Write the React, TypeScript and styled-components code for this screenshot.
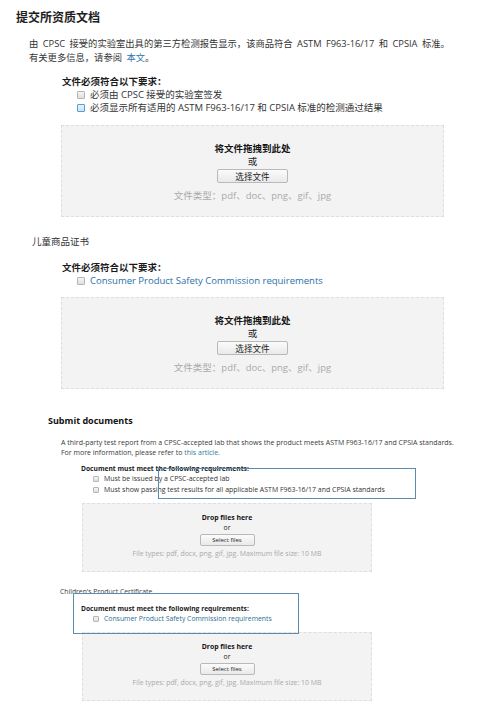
import React from 'react';
import styled, { createGlobalStyle, css } from 'styled-components';

type Lang = 'cn' | 'en';

const GlobalStyle = createGlobalStyle`
  html, body {
    margin: 0;
    padding: 0;
    background: #fff;
  }
  body {
    font-family: 'Open Sans', 'Noto Sans CJK SC', sans-serif;
    color: #333;
  }
`;

const Page = styled.div`
  width: 480px;
  height: 716px;
  overflow: hidden;
  padding-top: 10px;
  box-sizing: border-box;
`;

const CnTitle = styled.h1`
  margin: 0 0 0 16px;
  font-size: 12px;
  line-height: 16px;
  font-weight: 700;
  color: #1e1e1e;
`;

const EnTitle = styled.h2`
  margin: 26px 0 0 48px;
  font-size: 9px;
  line-height: 12px;
  font-weight: 700;
  color: #111;
`;

const Intro = styled.p<{ $lang: Lang }>`
  margin: 0;
  ${(p) =>
    p.$lang === 'cn'
      ? css`
          margin: 11px 0 0 29px;
          font-size: 9.3px;
          line-height: 14px;
          word-spacing: 2px;
          color: #333;
        `
      : css`
          margin: 11px 0 0 61px;
          font-size: 7px;
          line-height: 9.5px;
          color: #3a3a3a;
        `}
`;

const Link = styled.a<{ $lang: Lang }>`
  color: ${(p) => (p.$lang === 'cn' ? '#2f76b3' : '#2e7d98')};
  text-decoration: none;
`;

const Label = styled.div<{ $lang: Lang }>`
  ${(p) =>
    p.$lang === 'cn'
      ? css`
          margin: 18px 0 0 32px;
          font-size: 9.5px;
          line-height: 14px;
          color: #333;
        `
      : css`
          margin: 15px 0 0 60px;
          font-size: 6.8px;
          line-height: 10px;
          color: #3a3a3a;
        `}
`;

const Requirements = styled.div<{ $lang: Lang; $gap: number }>`
  margin-top: ${(p) => p.$gap}px;
  margin-left: ${(p) => (p.$lang === 'cn' ? 62 : 81)}px;
`;

const ReqHeading = styled.div<{ $lang: Lang }>`
  font-weight: 700;
  color: #1a1a1a;
  font-size: ${(p) => (p.$lang === 'cn' ? 9.5 : 6.7)}px;
  line-height: ${(p) => (p.$lang === 'cn' ? 13 : 10)}px;
`;

const ReqRow = styled.div<{ $lang: Lang; $link?: boolean }>`
  display: flex;
  align-items: center;
  padding-left: ${(p) => (p.$lang === 'cn' ? 15 : 12)}px;
  gap: 5px;
  font-size: ${(p) =>
    p.$lang === 'cn' ? (p.$link ? 9.5 : 9.5) : p.$link ? 6.85 : 6.95}px;
  line-height: ${(p) => (p.$lang === 'cn' ? 13 : 10.5)}px;
  color: ${(p) =>
    p.$link ? (p.$lang === 'cn' ? '#2a6fa8' : '#2f6f92') : '#333'};
`;

const Box = styled.span<{ $lang: Lang; $hover?: boolean }>`
  flex: none;
  box-sizing: border-box;
  width: ${(p) => (p.$lang === 'cn' ? 8 : 6)}px;
  height: ${(p) => (p.$lang === 'cn' ? 8 : 6)}px;
  border: 1px solid ${(p) => (p.$hover ? '#5d9ccc' : '#b5b5b5')};
  background: ${(p) =>
    p.$hover
      ? 'linear-gradient(#e4f2fb, #c9e3f5)'
      : 'linear-gradient(#f6f6f6, #dedede)'};
  border-radius: 1px;
`;

const DropZone = styled.div<{ $lang: Lang; $gap: number }>`
  box-sizing: border-box;
  display: flex;
  flex-direction: column;
  align-items: center;
  background: #f3f3f3;
  border: 1px dashed #dedede;
  margin-top: ${(p) => p.$gap}px;
  ${(p) =>
    p.$lang === 'cn'
      ? css`
          margin-left: 61px;
          width: 383px;
          height: 92px;
          padding-top: 15.5px;
        `
      : css`
          margin-left: 82px;
          width: 290px;
          height: 69px;
          padding-top: 9px;
        `}
`;

const DropTitle = styled.div<{ $lang: Lang }>`
  font-weight: 700;
  color: #151515;
  font-size: ${(p) => (p.$lang === 'cn' ? 9.5 : 6.9)}px;
  line-height: ${(p) => (p.$lang === 'cn' ? 13 : 10)}px;
`;

const DropOr = styled.div<{ $lang: Lang }>`
  color: #222;
  font-size: ${(p) => (p.$lang === 'cn' ? 9.5 : 6.9)}px;
  line-height: ${(p) => (p.$lang === 'cn' ? 13 : 10.5)}px;
`;

const SelectButton = styled.button<{ $lang: Lang }>`
  box-sizing: border-box;
  display: flex;
  align-items: center;
  justify-content: center;
  padding: 0;
  font-family: inherit;
  color: #222;
  border: 1px solid #b9b9b9;
  border-radius: 2px;
  background: linear-gradient(#fbfbfb, #e9e9e9);
  ${(p) =>
    p.$lang === 'cn'
      ? css`
          margin-top: 1.5px;
          width: 71px;
          height: 14px;
          font-size: 8.6px;
        `
      : css`
          margin-top: 0.5px;
          width: 55px;
          height: 12px;
          font-size: 6px;
        `}
`;

const FileTypes = styled.div<{ $lang: Lang }>`
  color: #aaa;
  ${(p) =>
    p.$lang === 'cn'
      ? css`
          margin-top: 5.5px;
          font-size: 9.5px;
          line-height: 13px;
        `
      : css`
          margin-top: 3px;
          font-size: 6.9px;
          line-height: 10px;
        `}
`;

const Annotated = styled.div`
  position: relative;
`;

const Highlight = styled.div<{
  $top: number;
  $left: number;
  $w: number;
  $h: number;
}>`
  position: absolute;
  top: ${(p) => p.$top}px;
  left: ${(p) => p.$left}px;
  width: ${(p) => p.$w}px;
  height: ${(p) => p.$h}px;
  box-sizing: border-box;
  border: 1.5px solid #5b8bb1;
  pointer-events: none;
`;

interface UploadProps {
  lang: Lang;
  gap: number;
}

const Upload = ({ lang, gap }: UploadProps) => (
  <DropZone $lang={lang} $gap={gap}>
    <DropTitle $lang={lang}>
      {lang === 'cn' ? '将文件拖拽到此处' : 'Drop files here'}
    </DropTitle>
    <DropOr $lang={lang}>{lang === 'cn' ? '或' : 'or'}</DropOr>
    <SelectButton $lang={lang}>
      {lang === 'cn' ? '选择文件' : 'Select files'}
    </SelectButton>
    <FileTypes $lang={lang}>
      {lang === 'cn'
        ? '文件类型：pdf、doc、png、gif、jpg'
        : 'File types: pdf, docx, png, gif, jpg. Maximum file size: 10 MB'}
    </FileTypes>
  </DropZone>
);

export default function App() {
  return (
    <Page>
      <GlobalStyle />
      <CnTitle>提交所资质文档</CnTitle>
      <Intro $lang="cn">
        由 CPSC 接受的实验室出具的第三方检测报告显示，该商品符合 ASTM F963-16/17 和 CPSIA 标准。
        <br />
        有关更多信息，请参阅 <Link $lang="cn">本文</Link>。
      </Intro>
      <Requirements $lang="cn" $gap={10}>
        <ReqHeading $lang="cn">文件必须符合以下要求：</ReqHeading>
        <ReqRow $lang="cn">
          <Box $lang="cn" />
          必须由 CPSC 接受的实验室签发
        </ReqRow>
        <ReqRow $lang="cn">
          <Box $lang="cn" $hover />
          必须显示所有适用的 ASTM F963-16/17 和 CPSIA 标准的检测通过结果
        </ReqRow>
      </Requirements>
      <Upload lang="cn" gap={11} />

      <Label $lang="cn">儿童商品证书</Label>
      <Requirements $lang="cn" $gap={12}>
        <ReqHeading $lang="cn">文件必须符合以下要求：</ReqHeading>
        <ReqRow $lang="cn" $link>
          <Box $lang="cn" />
          Consumer Product Safety Commission requirements
        </ReqRow>
      </Requirements>
      <Upload lang="cn" gap={10} />

      <EnTitle>Submit documents</EnTitle>
      <Intro $lang="en">
        A third-party test report from a CPSC-accepted lab that shows the product meets ASTM F963-16/17 and CPSIA standards.
        <br />
        For more information, please refer to <Link $lang="en">this article.</Link>
      </Intro>
      <Annotated>
        <Requirements $lang="en" $gap={7}>
          <ReqHeading $lang="en">Document must meet the following requirements:</ReqHeading>
          <ReqRow $lang="en">
            <Box $lang="en" />
            Must be issued by a CPSC-accepted lab
          </ReqRow>
          <ReqRow $lang="en">
            <Box $lang="en" />
            Must show passing test results for all applicable ASTM F963-16/17 and CPSIA standards
          </ReqRow>
        </Requirements>
        <Highlight $top={4} $left={158} $w={258} $h={31} />
      </Annotated>
      <Upload lang="en" gap={8} />

      <Annotated>
        <Label $lang="en">Children's Product Certificate</Label>
        <Requirements $lang="en" $gap={7}>
          <ReqHeading $lang="en">Document must meet the following requirements:</ReqHeading>
          <ReqRow $lang="en" $link>
            <Box $lang="en" />
            Consumer Product Safety Commission requirements
          </ReqRow>
        </Requirements>
        <Highlight $top={6} $left={73} $w={226} $h={41} />
      </Annotated>
      <Upload lang="en" gap={7.5} />
    </Page>
  );
}
